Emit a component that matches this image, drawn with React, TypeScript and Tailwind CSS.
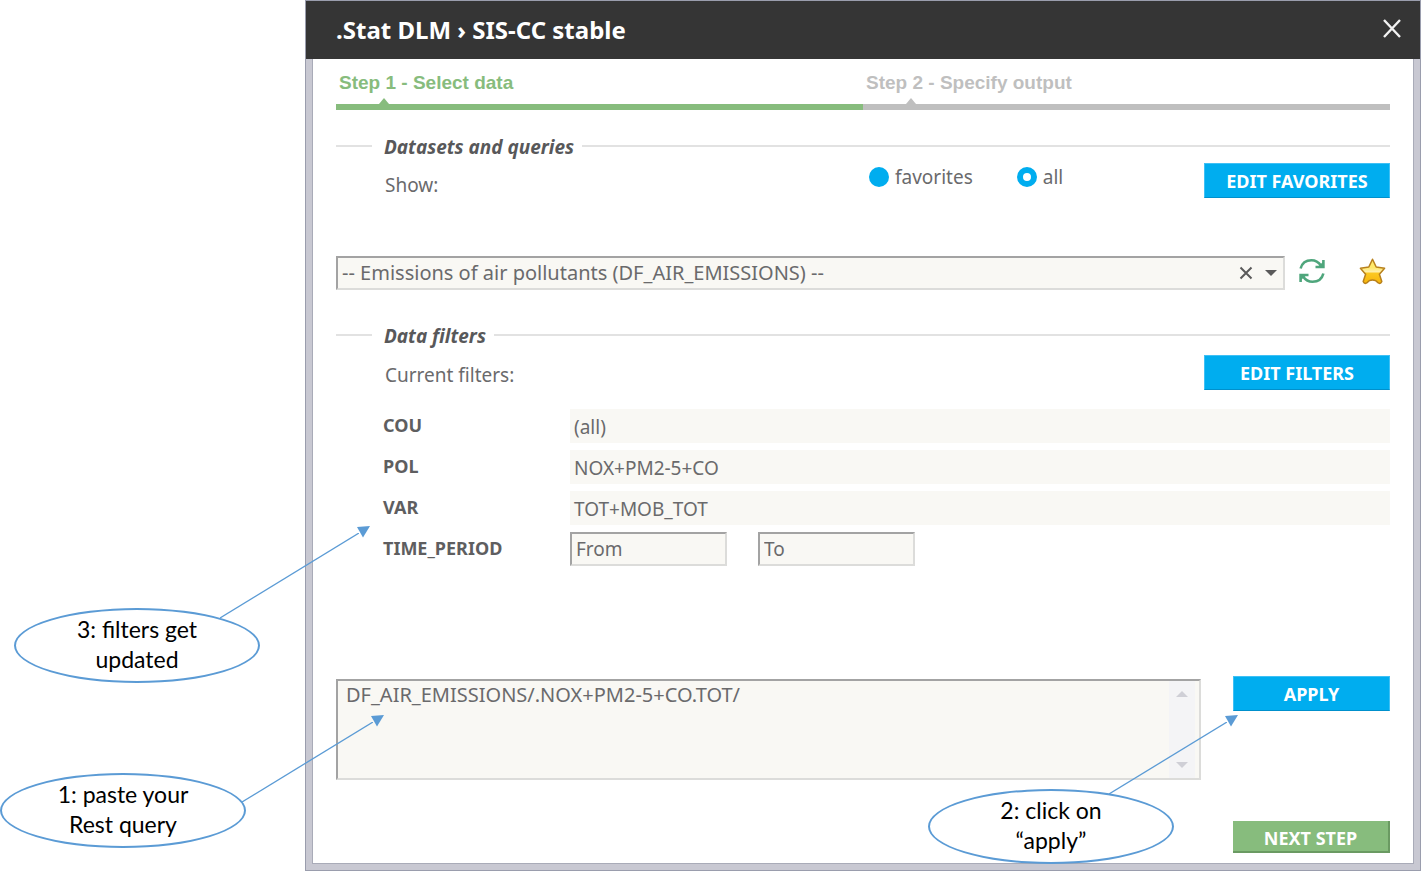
import type { ReactNode } from "react";

function Legend({ children }: { children: ReactNode }) {
  return (
    <div className="flex h-6 items-center">
      <span className="h-0.5 w-9 bg-[#e2e2e2]" />
      <h2 className="mr-2 ml-3 pt-0.5 text-[19px] leading-6 font-bold text-[#58585a] italic">{children}</h2>
      <span className="h-0.5 flex-1 bg-[#e2e2e2]" />
    </div>
  );
}

function ActionButton({ children, wide = false }: { children: ReactNode; wide?: boolean }) {
  return (
    <button
      type="button"
      className={`h-[35px] shrink-0 border border-[#3fc0f5] border-b-[#0090cc] bg-[#00adef] pt-0.5 text-[18px] font-bold text-white ${
        wide ? "w-[186px]" : "w-[157px]"
      }`}
    >
      {children}
    </button>
  );
}

function Step({ title, active = false }: { title: string; active?: boolean }) {
  return (
    <li className={`flex-1 ${active ? "text-[#87bc7d]" : "text-[#bfbfbf]"}`}>
      <div className="pl-[3px] font-['Liberation_Sans',sans-serif] text-[19px] leading-6 font-bold">{title}</div>
      <svg className="mt-[3px] ml-[43px] block h-1.5 w-2.5" viewBox="0 0 10 6" fill="currentColor">
        <path d="M5 0L10 6H0Z" />
      </svg>
      <div className="h-1.5 bg-current" />
    </li>
  );
}

function Radio({ label, checked = false }: { label: string; checked?: boolean }) {
  return (
    <label className="flex items-center gap-1.5">
      <input
        type="radio"
        name="show"
        defaultChecked={checked}
        className="size-5 appearance-none rounded-full bg-[#00adef] checked:border-6 checked:border-[#00adef] checked:bg-white"
      />
      <span>{label}</span>
    </label>
  );
}

const filters = [
  { name: "COU", value: "(all)" },
  { name: "POL", value: "NOX+PM2-5+CO" },
  { name: "VAR", value: "TOT+MOB_TOT" },
];

const field = "border-2 border-t-[#a3a3a3] border-l-[#a3a3a3] border-r-[#dcdcda] border-b-[#dcdcda] bg-[#f9f8f4]";

function RefreshIcon() {
  return (
    <svg className="size-[26px]" viewBox="0 0 26 26" fill="none" stroke="#4fa67c" strokeWidth="2.6">
      <path d="M1.600 10.500C3 5 7.500 2.200 12.500 2.200C16.500 2.200 19.500 4 22 7.500" />
      <path d="M24.400 2V9H16.500" />
      <path d="M19.500 8L24 4V9Z" fill="#4fa67c" stroke="none" />
      <path d="M24.400 15.500C23 21 18.500 23.800 13.500 23.800C9.500 23.800 6.500 22 4 18.500" />
      <path d="M1.600 24V17H9.500" />
      <path d="M6.500 18L2 22V17Z" fill="#4fa67c" stroke="none" />
    </svg>
  );
}

function StarIcon() {
  return (
    <svg className="size-[27px]" viewBox="0 0 27 27">
      <defs>
        <linearGradient id="gold" x1="0" y1="0" x2="0" y2="1">
          <stop offset="0.1" stopColor="#ffe96b" />
          <stop offset="0.35" stopColor="#ffe96b" />
          <stop offset="0.52" stopColor="#fff0ae" />
          <stop offset="0.58" stopColor="#fcc821" />
          <stop offset="1" stopColor="#f7b50a" />
        </linearGradient>
      </defs>
      <path
        d="M13.500 1.200L17.200 9L25.600 10.200L20.400 16.300L22.800 23.500Q21.500 26.500 18.800 24.700Q17 22 13.500 22Q10 22 8.200 24.700Q5.500 26.500 4.200 23.500L6.600 16.300L1.400 10.200L9.800 9Z"
        fill="url(#gold)"
        stroke="#b8801c"
        strokeWidth="1.500"
        strokeLinejoin="round"
      />
    </svg>
  );
}

function Callout({ className, children }: { className: string; children: ReactNode }) {
  return (
    <div
      className={`absolute flex h-[75px] w-[246px] items-center justify-center rounded-[50%] border-2 border-[#5b9bd5] bg-white pb-1 text-center font-['Lato',sans-serif] text-[23px] leading-[30px] text-black ${className}`}
    >
      <p>{children}</p>
    </div>
  );
}

function Arrow({ className }: { className: string }) {
  return (
    <svg className={`pointer-events-none absolute ${className}`} fill="none">
      <line x1="0" y1="100%" x2="100%" y2="0" stroke="#5b9bd5" strokeWidth="1.300" />
    </svg>
  );
}

function ArrowHead({ className }: { className: string }) {
  return (
    <svg className={`pointer-events-none absolute h-3 w-[13px] ${className}`} viewBox="0 0 13 12">
      <path d="M13 0L0 1L6 11.500Z" fill="#5b9bd5" />
    </svg>
  );
}

export default function App() {
  return (
    <div className="relative bg-white pl-[305px] font-['Noto_Sans',sans-serif] text-[19px] text-[#6a6a6c]">
      <section className="border border-[#9a9dad] bg-[#c8c8d2]" aria-label="Data extraction">
        <header className="flex h-[58px] items-center justify-between bg-[#353535] pr-[17px] pl-[30px] text-white">
          <h1 className="text-[24px] font-bold">.Stat DLM › SIS-CC stable</h1>
          <button type="button" aria-label="Close" className="pb-1">
            <svg className="size-[22px]" viewBox="0 0 22 22" stroke="#f2f2f2" strokeWidth="2.400">
              <path d="M3 3L19 20M19 3L3 20" />
            </svg>
          </button>
        </header>

        <main className="mx-1.5 mb-1.5 border border-t-0 border-[#a9abb8] bg-white pt-3 pr-[23px] pb-2.5 pl-[23px]">
          <ol className="flex">
            <Step title="Step 1 - Select data" active />
            <Step title="Step 2 - Specify output" />
          </ol>

          <div className="mt-6">
            <Legend>Datasets and queries</Legend>
          </div>
          <div className="mt-[5px] grid grid-cols-2 items-start">
            <div className="pt-2 pl-[49px] leading-7">Show:</div>
            <div className="flex items-start gap-11 pl-1.5">
              <Radio label="favorites" />
              <Radio label="all" checked />
              <div className="ml-auto flex">
                <ActionButton wide>EDIT FAVORITES</ActionButton>
              </div>
            </div>
          </div>

          <div className="mt-[57px] flex items-center">
            <div className={`flex h-[34px] flex-1 items-center pr-1 ${field}`}>
              <select aria-label="Dataset" className="h-full flex-1 appearance-none pl-1 text-[20px] outline-none">
                <option>-- Emissions of air pollutants (DF_AIR_EMISSIONS) --</option>
              </select>
              <button type="button" aria-label="Clear dataset">
                <svg className="size-3.5" viewBox="0 0 14 14" stroke="#5a5a5a" strokeWidth="2">
                  <path d="M1.500 1.500L12.500 12.500M12.500 1.500L1.500 12.500" />
                </svg>
              </button>
              <svg className="mr-0.5 ml-3 h-1.5 w-3" viewBox="0 0 12 6" fill="#5a5a5a">
                <path d="M0 0H12L6 6Z" />
              </svg>
            </div>
            <button type="button" aria-label="Refresh" className="ml-3.5 pb-1">
              <RefreshIcon />
            </button>
            <button type="button" aria-label="Add to favorites" className="mr-1 ml-[34px] pb-1">
              <StarIcon />
            </button>
          </div>

          <div className="mt-[33px]">
            <Legend>Data filters</Legend>
          </div>
          <div className="mt-2 flex items-start justify-between pl-[49px]">
            <div className="pt-1.5 leading-7">Current filters:</div>
            <ActionButton wide>EDIT FILTERS</ActionButton>
          </div>

          <dl className="mt-[19px] flex flex-col gap-[7px] pl-[47px]">
            {filters.map((f) => (
              <div key={f.name} className="flex h-[34px]">
                <dt className="w-[187px] text-[18px] leading-8 font-bold text-[#5e5e60]">{f.name}</dt>
                <dd className="flex-1 bg-[#f9f8f4] pl-1 leading-9">{f.value}</dd>
              </div>
            ))}
            <div className="flex h-[34px]">
              <dt className="w-[187px] text-[18px] leading-8 font-bold text-[#5e5e60]">TIME_PERIOD</dt>
              <dd className="flex gap-[31px]">
                <input aria-label="From" placeholder="From" className={`w-[157px] px-1 placeholder:text-[#6a6a6c] ${field}`} />
                <input aria-label="To" placeholder="To" className={`w-[157px] px-1 placeholder:text-[#6a6a6c] ${field}`} />
              </dd>
            </div>
          </dl>

          <div className="mt-[110px] flex items-start gap-8">
            <div className={`mt-[3px] flex h-[101px] flex-1 ${field}`}>
              <textarea
                aria-label="Rest query"
                defaultValue="DF_AIR_EMISSIONS/.NOX+PM2-5+CO.TOT/"
                className="flex-1 resize-none overflow-hidden pl-2 text-[20px] leading-7 outline-none"
              />
              <div className="mr-1 flex w-[26px] flex-col items-center justify-between bg-[#f4f4f6] py-2.5">
                <svg className="h-1.5 w-3" viewBox="0 0 12 6" fill="#cfcfd6">
                  <path d="M0 6H12L6 0Z" />
                </svg>
                <svg className="h-1.5 w-3" viewBox="0 0 12 6" fill="#cfcfd6">
                  <path d="M0 0H12L6 6Z" />
                </svg>
              </div>
            </div>
            <ActionButton>APPLY</ActionButton>
          </div>

          <div className="mt-[41px] flex justify-end">
            <button
              type="button"
              className="h-8 w-[157px] border-r-2 border-b-2 border-[#6a9a62] bg-[#87bc7d] pt-1 text-[18px] font-bold text-white"
            >
              NEXT STEP
            </button>
          </div>
        </main>
      </section>

      <Callout className="top-[608px] left-[14px]">
        3: filters get
        <br />
        updated
      </Callout>
      <Callout className="top-[773px] left-0">
        1: paste your
        <br />
        Rest query
      </Callout>
      <Callout className="top-[789px] left-[928px]">
        2: click on
        <br />
        “apply”
      </Callout>
      <Arrow className="top-[533px] left-[220px] h-[85px] w-[139px]" />
      <ArrowHead className="top-[526px] left-[357px]" />
      <Arrow className="top-[722px] left-[242px] h-[80px] w-[131px]" />
      <ArrowHead className="top-[715px] left-[371px]" />
      <Arrow className="top-[722px] left-[1109px] h-[72px] w-[118px]" />
      <ArrowHead className="top-[715px] left-[1225px]" />
    </div>
  );
}
